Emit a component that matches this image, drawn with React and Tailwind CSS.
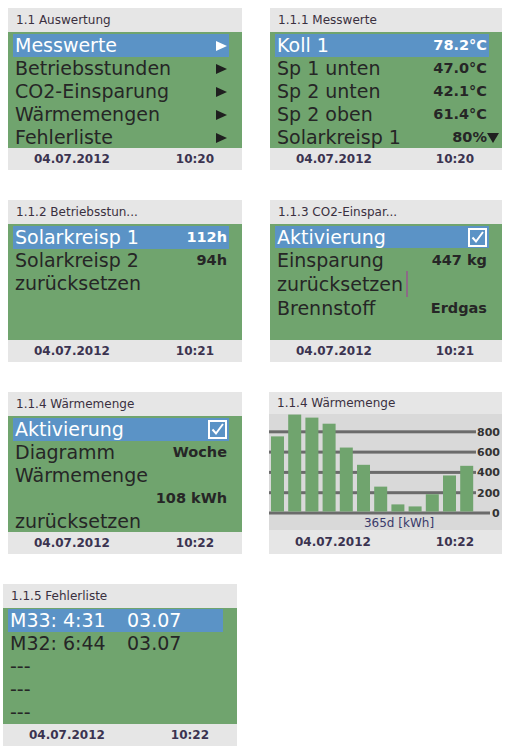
import React from 'react';

const font = { fontFamily: '"DejaVu Sans", Verdana, sans-serif' };

const Arrow = ({ white }) => (
  <svg width="11" height="10" viewBox="0 0 11 10" className="block">
    <polygon points="0,0 11,5 0,10" fill={white ? '#ffffff' : '#1f1f1f'} />
  </svg>
);

const Check = () => (
  <svg width="19" height="19" viewBox="0 0 19 19" className="block">
    <rect x="1" y="1" width="17" height="17" fill="none" stroke="#ffffff" strokeWidth="2" />
    <path d="M4.5 9.5 L8 13.5 L15 4" fill="none" stroke="#ffffff" strokeWidth="2" />
  </svg>
);

const Panel = ({ title, time, children, className = '', bodyClass = '' }) => (
  <div className={`flex flex-col ${className}`}>
    <div className="h-6 bg-[#e6e6e6] flex items-center pl-[8px] text-[12px] font-medium text-[#3a3040] whitespace-nowrap">
      {title}
    </div>
    <div className={`h-[116px] bg-[#70a46e] overflow-hidden ${bodyClass}`}>{children}</div>
    <div className="h-[22px] bg-[#e6e6e6] flex items-center justify-between pl-[26px] pr-[28px] text-[12px] font-bold text-[#3b3350]">
      <span>04.07.2012</span>
      <span>{time}</span>
    </div>
  </div>
);

const Row = ({ label, value, active, arrow, extra, h = 'h-[23px]' }) => (
  <div
    className={`${h} ml-[5px] mr-[13px] pl-[2px] pr-[2px] flex items-center justify-between whitespace-nowrap ${
      active ? 'bg-[#5b93c6] text-white' : 'text-[#262626]'
    }`}
  >
    <span className="text-[19px] leading-none">{label}</span>
    {arrow && <Arrow white={active} />}
    {value && <span className="text-[14.5px] font-bold leading-none relative">{value}{extra}</span>}
  </div>
);

const bars = [740, 955, 925, 865, 630, 460, 245, 70, 50, 170, 355, 450];

const Chart = () => {
  const zero = 99;
  const k = 0.1015;
  const grid = [800, 600, 400, 200];
  return (
    <svg width="233" height="116" viewBox="0 0 233 116" className="block">
      <rect width="233" height="116" fill="#d9d9d9" />
      {grid.map((v) => (
        <g key={v}>
          <rect x="0" y={zero - v * k - 1.5} width="207" height="3" fill="#6b6b6b" />
          <text x="208" y={zero - v * k + 4} fontSize="11" fontWeight="bold" fill="#333" fontFamily="DejaVu Sans, sans-serif">
            {v}
          </text>
        </g>
      ))}
      <rect x="0" y={zero - 1.5} width="221" height="3" fill="#6b6b6b" />
      <text x="223" y={zero + 4} fontSize="11" fontWeight="bold" fill="#333" fontFamily="DejaVu Sans, sans-serif">
        0
      </text>
      {bars.map((v, i) => (
        <rect key={i} x={2 + i * 17.2} y={zero - 1.5 - v * k} width="13" height={v * k} fill="#70a46e" />
      ))}
      <text x="130" y="113" fontSize="12" fill="#3a3a6a" textAnchor="middle" fontFamily="DejaVu Sans, sans-serif">
        365d [kWh]
      </text>
    </svg>
  );
};

export default function App() {
  return (
    <div className="w-[508px] h-[748px] bg-white pt-2 pl-2" style={font}>
      <div className="grid grid-cols-[234px_232px] gap-x-[28px] gap-y-[30px]">
        <Panel title="1.1 Auswertung" time="10:20" bodyClass="pt-[2px]">
          <Row label="Messwerte" arrow active />
          <Row label="Betriebsstunden" arrow />
          <Row label="CO2-Einsparung" arrow />
          <Row label="Wärmemengen" arrow />
          <Row label="Fehlerliste" arrow />
        </Panel>

        <Panel title="1.1.1 Messwerte" time="10:20" bodyClass="pt-[2px]">
          <Row label="Koll 1" value="78.2°C" active />
          <Row label="Sp 1 unten" value="47.0°C" />
          <Row label="Sp 2 unten" value="42.1°C" />
          <Row label="Sp 2 oben" value="61.4°C" />
          <Row
            label="Solarkreisp 1"
            value="80%"
            extra={
              <svg width="12" height="10" viewBox="0 0 12 10" className="absolute left-full top-[3px]">
                <polygon points="0,0 12,0 6,10" fill="#1f1f1f" />
              </svg>
            }
          />
        </Panel>

        <Panel title="1.1.2 Betriebsstun..." time="10:21" bodyClass="pt-[2px]">
          <Row label="Solarkreisp 1" value="112h" active />
          <Row label="Solarkreisp 2" value="94h" />
          <Row label="zurücksetzen" />
        </Panel>

        <Panel title="1.1.3 CO2-Einspar..." time="10:21" bodyClass="pt-[2px]">
          <div className="h-[22px] ml-[5px] mr-[13px] pl-[2px] pr-[2px] flex items-center justify-between bg-[#5b93c6] text-white">
            <span className="text-[19px] leading-none">Aktivierung</span>
            <Check />
          </div>
          <Row label="Einsparung" value="447 kg" h="h-[24px]" />
          <div className="h-[24px] ml-[5px] pl-[2px] flex items-center text-[#262626]">
            <span className="text-[19px] leading-none">zurücksetzen</span>
            <span className="ml-[3px] w-[2px] h-[26px] bg-[#8b6b86]" />
          </div>
          <Row label="Brennstoff" value="Erdgas" h="h-[24px]" />
        </Panel>

        <Panel title="1.1.4 Wärmemenge" time="10:22" bodyClass="pt-[2px]">
          <div className="h-[23px] ml-[5px] mr-[13px] pl-[2px] pr-[2px] flex items-center justify-between bg-[#5b93c6] text-white">
            <span className="text-[19px] leading-none">Aktivierung</span>
            <Check />
          </div>
          <Row label="Diagramm" value="Woche" />
          <Row label="Wärmemenge" />
          <div className="h-[23px] ml-[5px] mr-[13px] pr-[2px] flex items-center justify-end text-[#262626]">
            <span className="text-[14.5px] font-bold leading-none">108 kWh</span>
          </div>
          <Row label="zurücksetzen" />
        </Panel>

        <div className="flex flex-col -ml-px">
          <div className="h-[22px] bg-[#e6e6e6] flex items-center pl-[8px] text-[12px] font-medium text-[#3a3040]">
            1.1.4 Wärmemenge
          </div>
          <Chart />
          <div className="h-[24px] bg-[#e6e6e6] flex items-center justify-between pl-[26px] pr-[28px] text-[12px] font-bold text-[#3b3350]">
            <span>04.07.2012</span>
            <span>10:22</span>
          </div>
        </div>

        <Panel title="1.1.5 Fehlerliste" time="10:22" className="-ml-[5px] w-[234px]" bodyClass="pt-px">
          <div className="h-[23px] ml-[5px] mr-[14px] pl-[2px] flex items-center bg-[#5b93c6] text-white text-[19px] leading-none whitespace-nowrap">
            <span className="w-[117px]">M33: 4:31</span>
            <span>03.07</span>
          </div>
          <div className="h-[23px] ml-[5px] mr-[14px] pl-[2px] flex items-center text-[#262626] text-[19px] leading-none whitespace-nowrap">
            <span className="w-[117px]">M32: 6:44</span>
            <span>03.07</span>
          </div>
          <Row label="---" />
          <Row label="---" />
          <Row label="---" />
        </Panel>
      </div>
    </div>
  );
}
